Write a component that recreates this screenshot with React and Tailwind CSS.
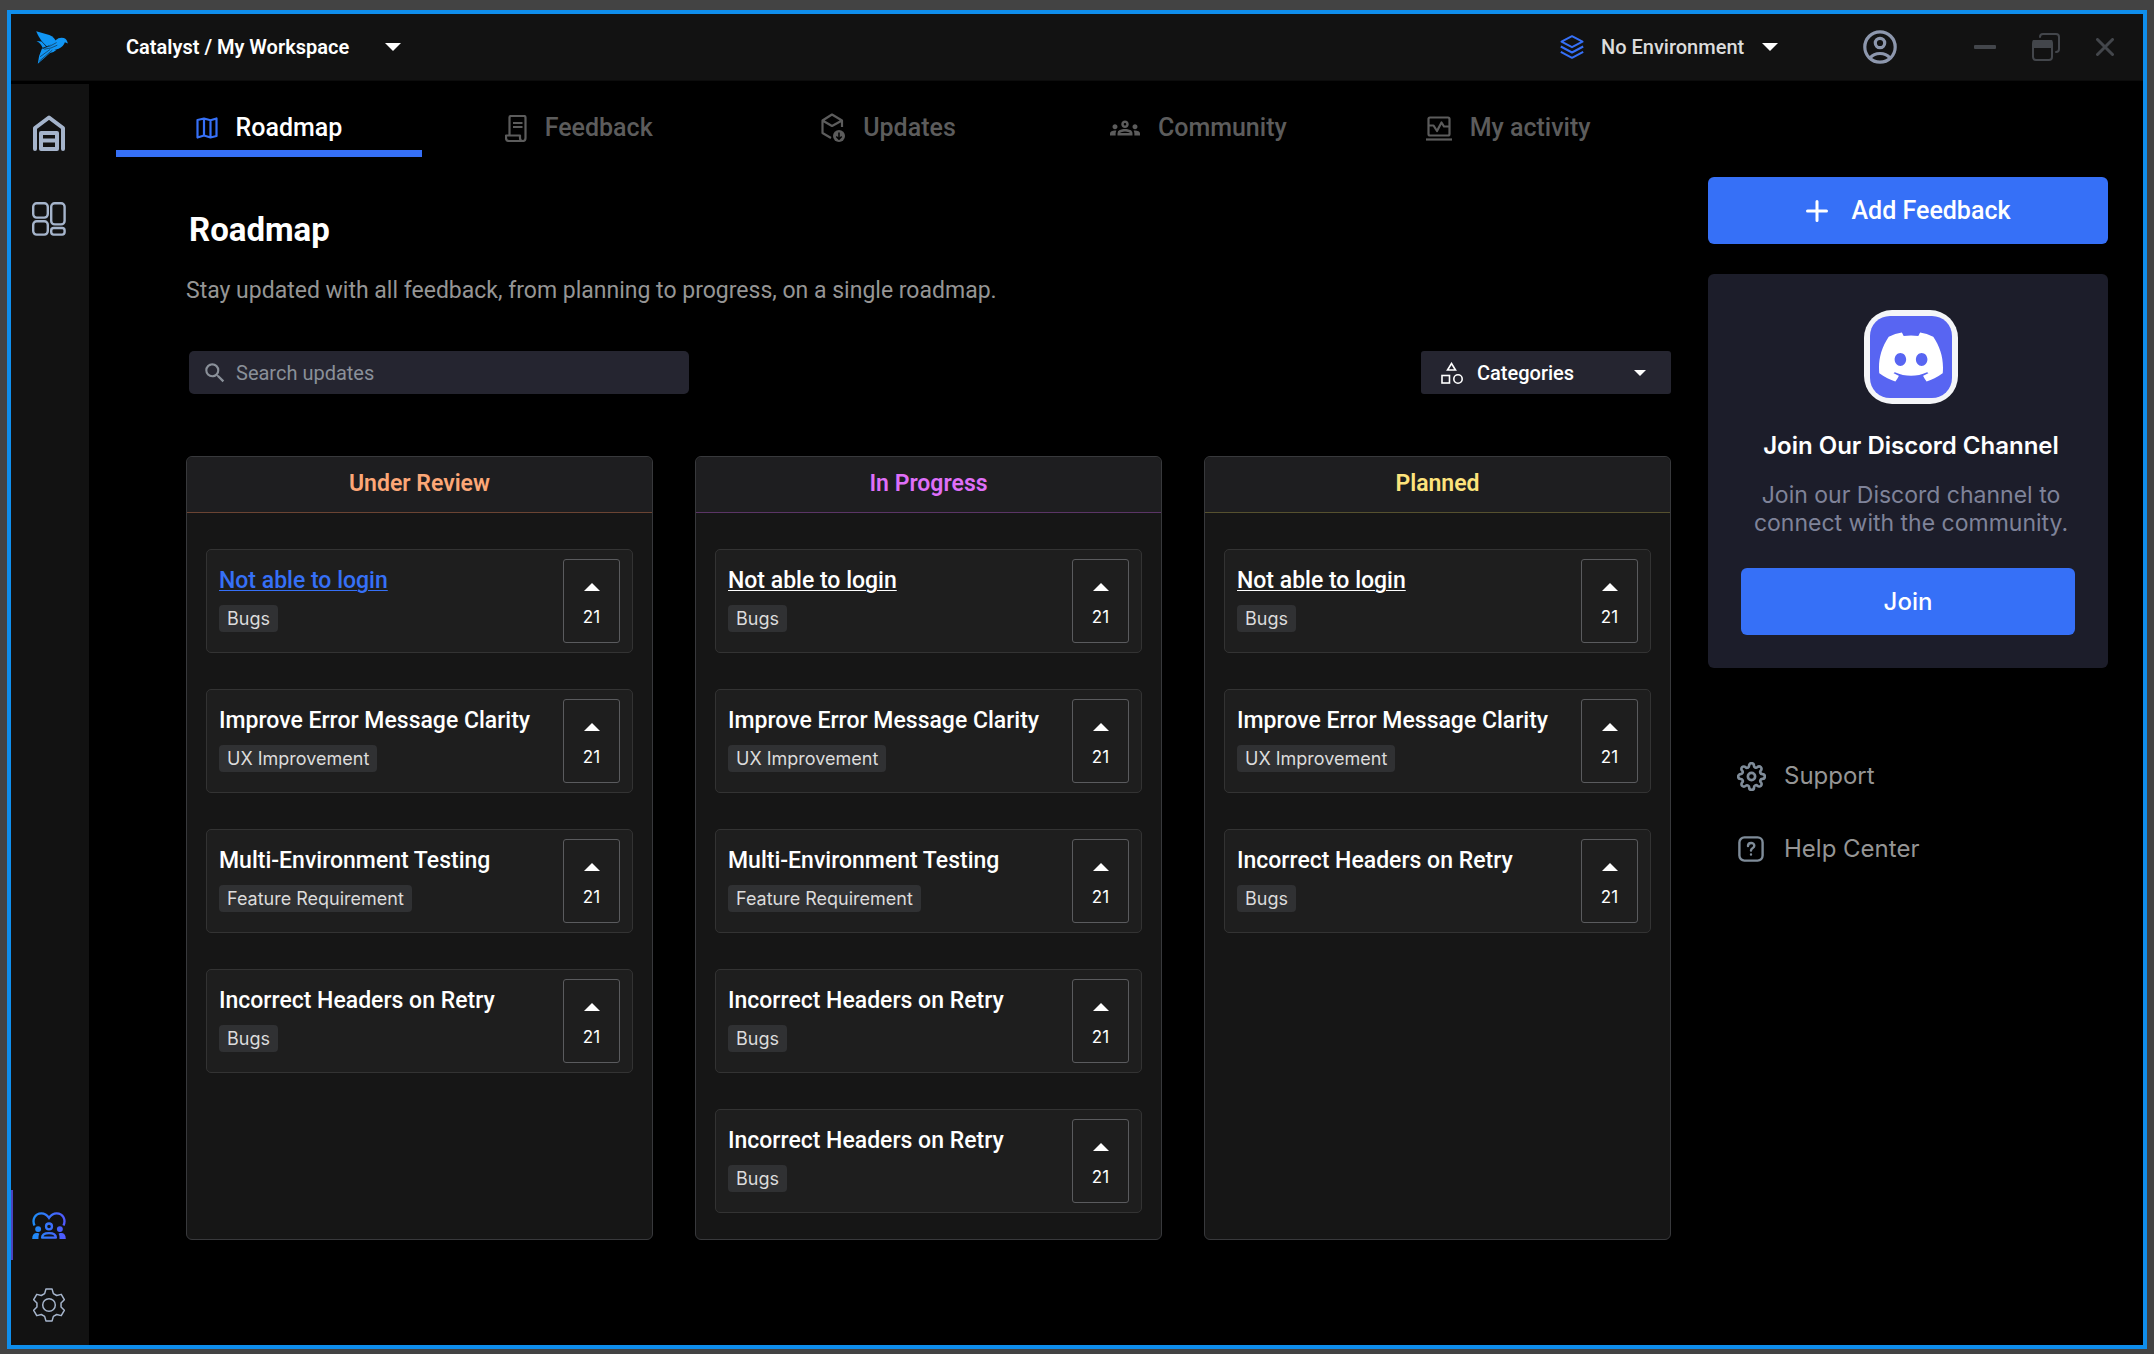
import React from "react";
import { FiSettings } from "react-icons/fi";
import { MdOutlineGroups, MdSearch } from "react-icons/md";
import { SiDiscord } from "react-icons/si";

const ROBOTO = "font-['Roboto',sans-serif]";
const INTER = "font-['Inter',sans-serif]";

function Caret({ className, up = false }) {
  return (
    <svg viewBox="0 0 16 8" className={className} fill="currentColor" aria-hidden="true">
      {up ? <path d="M0 8 8 0l8 8z" /> : <path d="M0 0h16L8 8z" />}
    </svg>
  );
}

function BirdLogo() {
  return (
    <svg viewBox="0 0 96 100" className="h-[33px] w-8" aria-label="Catalyst" role="img">
      <g fill="#1196f5">
        <path d="M0 1 40 12q16 7 22 23L32 46Q12 30 0 1z" />
        <path d="M1 30l15 2 14 15-10 5q-6-16-19-22z" />
        <path d="M60 27q9-9 24-6 10 4 12 17l-9-4q-4 12-19 20-14 6-34 6-6-4-12-8 20-6 38-25z" />
        <path d="M18 52q22 8 44 5-8 8-20 10L5 99q2-25 13-47z" />
      </g>
      <g fill="none" stroke="#121212" strokeWidth="1.6">
        <path d="M18 52q26-4 44-17M24 55q22-1 40-12M12 78l30-22M9 92l40-34" />
      </g>
    </svg>
  );
}

function HomeIcon() {
  return (
    <svg viewBox="0 0 32 36" className="h-9 w-8" fill="none" stroke="#a5b4cb" strokeWidth="4" aria-hidden="true">
      <path d="M2 34V13L16 2.500l14 10.500v21" strokeLinecap="round" strokeLinejoin="round" />
      <path d="M8 18h16v16H8z" strokeLinejoin="round" />
      <path d="M8 25.500h16" />
    </svg>
  );
}

function DashboardIcon() {
  return (
    <svg viewBox="0 0 34 34" className="size-[34px]" fill="none" stroke="#a5b4cb" strokeWidth="2.400" aria-hidden="true">
      <rect x="1.200" y="1.200" width="14.600" height="14.400" rx="3.500" />
      <rect x="19.200" y="1.200" width="13.400" height="21.200" rx="3.500" />
      <rect x="1.200" y="19.200" width="14.600" height="13.400" rx="3.500" />
      <rect x="19.200" y="26" width="13.400" height="6.600" rx="2.500" />
    </svg>
  );
}

function CommunityHeartIcon() {
  return (
    <svg viewBox="0 0 102 82" className="h-[27px] w-[34px]" aria-hidden="true">
      <defs>
        <linearGradient id="heart" gradientUnits="userSpaceOnUse" x1="0" y1="0" x2="102" y2="0">
          <stop offset="0" stopColor="#1c8df5" />
          <stop offset="1" stopColor="#5358ff" />
        </linearGradient>
      </defs>
      <g fill="none" stroke="url(#heart)" strokeWidth="7">
        <path d="M7 41C-1 24 8 4 28 4c10 0 16 4 23 14C58 8 64 4 74 4c20 0 29 20 21 37" />
        <circle cx="51" cy="44" r="9" />
        <path d="M30 78c0-9 9-14 21-14s21 5 21 14z" strokeLinejoin="round" />
      </g>
      <g fill="url(#heart)">
        <circle cx="18" cy="52" r="9" />
        <circle cx="84" cy="52" r="9" />
        <path d="M0 82c0-12 5-18 14-18 4 0 6 1 8 2-3 4-3 9-3 16zM102 82c0-12-5-18-14-18-4 0-6 1-8 2 3 4 3 9 3 16z" />
      </g>
    </svg>
  );
}

const gearPoints = [0, 60, 120, 180, 240, 300]
  .flatMap((a) => [[a - 21, 12.2], [a - 11, 16.2], [a + 11, 16.2], [a + 21, 12.2]])
  .map(([deg, r]) => {
    const t = ((deg - 90) * Math.PI) / 180;
    return `${(17 + r * Math.cos(t)).toFixed(2)},${(17 + r * Math.sin(t)).toFixed(2)}`;
  })
  .join(" ");

function GearIcon() {
  return (
    <svg viewBox="0 0 34 34" className="size-[34px]" fill="none" stroke="#a5b4cb" strokeWidth="1.500" strokeLinejoin="round" aria-hidden="true">
      <polygon points={gearPoints} />
      <circle cx="17" cy="17" r="6.300" />
    </svg>
  );
}

function MapIcon() {
  return (
    <svg viewBox="0 0 22 22" className="size-[22px]" fill="none" stroke="currentColor" strokeWidth="2.200" strokeLinejoin="round" aria-hidden="true">
      <path d="M1.500 3 8 1.500l6.500 1.800 6-1.800v17.500l-6 1.500L8 18.500l-6.500 2zM8 1.500v17M14.500 3.300v17" />
    </svg>
  );
}

function ScrollIcon() {
  return (
    <svg viewBox="0 0 22 27" className="h-[27px] w-[22px]" fill="none" stroke="currentColor" strokeWidth="2.200" strokeLinejoin="round" aria-hidden="true">
      <path d="M4.500 20V2.500C4.500 1.500 5 1 6 1h13c1 0 1.500.5 1.500 1.500V23c0 1.600-1 3-2.700 3H4c-1.700 0-3-1.300-3-3v-2.500h14V23c0 1.700 1 3 2.800 3" />
      <path d="M8 8h9.500M8 12h9.500" />
    </svg>
  );
}

function PackageDownIcon() {
  return (
    <svg viewBox="0 0 24 30" className="h-[30px] w-6" fill="none" stroke="currentColor" strokeWidth="2.200" strokeLinejoin="round" aria-hidden="true">
      <path d="M10 25 1.500 20V7.500L11 1.500l10 6V14M1.500 7.500l9.500 5.500 10-5.500" />
      <circle cx="18" cy="23" r="6" fill="currentColor" stroke="none" />
      <path d="M18 19.500v6.500M15.300 23.500l2.700 2.700 2.700-2.700" stroke="#000" strokeWidth="1.500" />
    </svg>
  );
}

function ActivityIcon() {
  return (
    <svg viewBox="0 0 26 25" className="h-[25px] w-[26px]" fill="none" stroke="currentColor" strokeWidth="2.200" strokeLinejoin="round" aria-hidden="true">
      <path d="M2.500 3c0-1 .5-1.500 1.500-1.500h18c1 0 1.500.5 1.500 1.500v15c0 1-.5 1.500-1.500 1.500H4c-1 0-1.500-.5-1.500-1.500z" />
      <path d="M2.500 9.500h5L11 15l4.500-8.500 2.500 4h5.500" />
      <path d="M0 23.500h26" />
    </svg>
  );
}

function LayersIcon() {
  return (
    <svg viewBox="0 0 24 24" className="size-6" fill="none" stroke="#3670f7" strokeWidth="2" strokeLinejoin="round" aria-hidden="true">
      <path d="M12 1.200 22.500 6.700 12 12.200 1.500 6.700z" />
      <path d="M.8 11.500 12 17.500l11.200-6M.8 16.800l11.200 6 11.200-6" />
    </svg>
  );
}

function UserIcon() {
  return (
    <svg viewBox="0 0 34 34" className="size-[34px]" fill="none" stroke="#8d97ad" strokeWidth="3.200" aria-hidden="true">
      <circle cx="17" cy="17" r="15.200" />
      <circle cx="17" cy="13" r="4.700" />
      <path d="M7 28c2.500-3 6-4.500 10-4.500S24.500 25 27 28" />
    </svg>
  );
}

function RestoreIcon() {
  return (
    <svg viewBox="0 0 28 28" className="size-7" fill="none" stroke="currentColor" strokeWidth="2" strokeLinecap="round" aria-hidden="true">
      <rect x="1" y="8" width="19" height="19" rx="3" />
      <path d="M1.500 8h18v6h-18z" fill="currentColor" strokeLinejoin="round" />
      <path d="M8 4c0-2 1-3 3-3h13c2 0 3 1 3 3v12c0 2-1 3-3 3" />
    </svg>
  );
}

function ShapesIcon({ className }) {
  return (
    <svg viewBox="0 0 22 22" className={className} fill="none" stroke="currentColor" strokeWidth="1.600" aria-hidden="true">
      <path d="M10.500 1.500 14.500 8h-8z" />
      <rect x="1" y="13.500" width="7.500" height="7.500" />
      <circle cx="17" cy="17" r="4.200" />
    </svg>
  );
}

function HelpIcon() {
  return (
    <svg viewBox="0 0 26 26" className="size-[26px]" fill="none" stroke="#7f8c99" strokeWidth="2.400" strokeLinecap="round" aria-hidden="true">
      <rect x="1.400" y="1.400" width="23.200" height="23.200" rx="5" />
      <path d="M10 10c0-4 6.300-4 6.300-.3 0 2.400-3.300 2.500-3.300 4.800" />
      <circle cx="13" cy="18.500" r=".6" fill="#7f8c99" strokeWidth="1.200" />
    </svg>
  );
}

const tabs = [
  { label: "Roadmap", icon: <MapIcon />, active: true },
  { label: "Feedback", icon: <ScrollIcon /> },
  { label: "Updates", icon: <PackageDownIcon /> },
  { label: "Community", icon: <MdOutlineGroups className="size-[30px]" /> },
  { label: "My activity", icon: <ActivityIcon /> },
];

const login = { title: "Not able to login", tag: "Bugs", link: true };
const clarity = { title: "Improve Error Message Clarity", tag: "UX Improvement" };
const testing = { title: "Multi-Environment Testing", tag: "Feature Requirement" };
const headers = { title: "Incorrect Headers on Retry", tag: "Bugs" };

const columns = [
  {
    name: "Under Review",
    head: "text-[#fca777] border-[#6b4433]",
    items: [{ ...login, highlight: true }, clarity, testing, headers],
  },
  {
    name: "In Progress",
    head: "text-[#df6ff8] border-[#5b3566]",
    items: [login, clarity, testing, headers, headers],
  },
  {
    name: "Planned",
    head: "text-[#fde37c] border-[#56512f]",
    items: [login, clarity, headers],
  },
];

function Card({ item }) {
  return (
    <li className="flex h-[104px] items-center justify-between rounded-[5px] border border-[#333333] bg-[#1e1e1e] px-3">
      <div className="flex flex-col items-start gap-2.5 pb-1">
        {item.link ? (
          <a
            href="#login"
            className={`text-[23px] leading-7 font-medium underline decoration-1 underline-offset-2 ${
              item.highlight ? "text-[#3670f7]" : "text-white"
            }`}
          >
            {item.title}
          </a>
        ) : (
          <h3 className="text-[23px] leading-7 font-medium text-white">{item.title}</h3>
        )}
        <span className={`rounded bg-[#303133] px-2 text-lg leading-[27px] text-[#dcdcdc] ${INTER}`}>
          {item.tag}
        </span>
      </div>
      <button
        type="button"
        aria-label={`Upvote ${item.title}`}
        className={`flex h-[84px] w-[57px] flex-col items-center justify-center gap-4 rounded-[3px] border border-[#5a5b5e] pt-2 text-[17px] leading-5 text-white ${INTER}`}
      >
        <Caret up className="h-2 w-4" />
        21
      </button>
    </li>
  );
}

function Column({ column }) {
  return (
    <section className="rounded-md border border-[#38393c] bg-[#161616]">
      <h2
        className={`flex h-14 items-center justify-center rounded-t-md border-b bg-[#1e1e20] pb-0.5 text-[23px] leading-7 font-semibold ${column.head}`}
      >
        {column.name}
      </h2>
      <ul className="flex flex-col gap-9 px-[19px] pt-9 pb-[26px]">
        {column.items.map((item, i) => (
          <Card key={i} item={item} />
        ))}
      </ul>
    </section>
  );
}

export default function App() {
  return (
    <div className={`flex min-h-screen bg-[#434343] px-[7px] pt-2.5 pb-[5px] ${ROBOTO}`}>
      <div className="flex flex-1 flex-col border-4 border-[#0f8eec] bg-black">
        <header className="flex h-[67px] items-center justify-between border-b border-[#0c0c0c] bg-[#121212] pr-[29px] pl-[25px]">
          <div className="flex items-center gap-[58px]">
            <BirdLogo />
            <div className="relative flex items-center">
              <select
                aria-label="Workspace"
                className="appearance-none bg-transparent pr-[51px] text-xl leading-7 font-semibold text-white"
              >
                <option>Catalyst / My Workspace</option>
              </select>
              <Caret className="pointer-events-none absolute right-0 h-2 w-4 text-white" />
            </div>
          </div>
          <div className="flex items-center">
            <LayersIcon />
            <div className="relative ml-[17px] flex items-center">
              <select
                aria-label="Environment"
                className="appearance-none bg-transparent pr-[33px] text-xl leading-7 font-medium text-[#dcdcdc]"
              >
                <option>No Environment</option>
              </select>
              <Caret className="pointer-events-none absolute right-0 h-2 w-4 text-white" />
            </div>
            <button type="button" aria-label="Account" className="ml-[85px]">
              <UserIcon />
            </button>
            <div className="ml-[77px] flex items-center gap-[36px] text-[#43464b]">
              <button type="button" aria-label="Minimize">
                <svg viewBox="0 0 22 4" className="h-1 w-[22px]" fill="currentColor">
                  <rect width="22" height="4" rx="1" />
                </svg>
              </button>
              <button type="button" aria-label="Restore">
                <RestoreIcon />
              </button>
              <button type="button" aria-label="Close">
                <svg viewBox="0 0 18 18" className="size-[18px]" fill="none" stroke="currentColor" strokeWidth="3" strokeLinecap="round">
                  <path d="M1.500 1.500l15 15M16.500 1.500l-15 15" />
                </svg>
              </button>
            </div>
          </div>
        </header>

        <div className="flex flex-1 pt-[3px]">
          <nav aria-label="Main" className="flex w-[78px] flex-col items-center bg-[#121212] pt-[31px] pr-0.5 pb-[23px]">
            <button type="button" aria-label="Home">
              <HomeIcon />
            </button>
            <button type="button" aria-label="Dashboard" className="mt-[51px]">
              <DashboardIcon />
            </button>
            <button
              type="button"
              aria-label="Community"
              className="mt-auto mb-7 flex h-[70px] w-full items-center justify-center border-x-2 border-l-[#4a44c0] border-r-transparent"
            >
              <CommunityHeartIcon />
            </button>
            <button type="button" aria-label="Settings">
              <GearIcon />
            </button>
          </nav>

          <main className="min-w-0 flex-1 pl-[27px]">
            <div role="tablist" className="grid grid-cols-5 gap-1 pr-2.5">
              {tabs.map((t) => (
                <button
                  key={t.label}
                  type="button"
                  role="tab"
                  aria-selected={!!t.active}
                  className={`flex h-[73px] items-center justify-center gap-[18px] border-b-[7px] pt-[22px] text-[25px] leading-8 font-medium ${
                    t.active ? "border-[#3670f7] text-white" : "border-transparent text-[#5c5c5c]"
                  }`}
                >
                  <span className={t.active ? "text-[#3670f7]" : "text-[#5c5c5c]"}>{t.icon}</span>
                  {t.label}
                </button>
              ))}
            </div>

            <div className="pl-[70px]">
              <h1 className="mt-[53px] pl-[3px] text-[33px] leading-10 font-bold text-white">Roadmap</h1>
              <p className="mt-[27px] text-[23px] leading-7 text-[#959595]">
                Stay updated with all feedback, from planning to progress, on a single roadmap.
              </p>

              <div className="mt-[46px] flex items-center justify-between pl-[3px]">
                <label className="flex h-[43px] w-[500px] items-center gap-2 rounded-[5px] bg-[#252530] px-[13px]">
                  <MdSearch className="size-[26px] text-[#8a9099]" aria-hidden="true" />
                  <input
                    type="text"
                    aria-label="Search updates"
                    placeholder="Search updates"
                    className="min-w-0 flex-1 bg-transparent text-xl leading-6 text-white outline-none placeholder:text-[#8a9099]"
                  />
                </label>
                <div className="relative flex w-[250px] items-center text-white">
                  <ShapesIcon className="pointer-events-none absolute left-5 size-[22px]" />
                  <select
                    aria-label="Categories"
                    className="h-[43px] w-full appearance-none rounded-[3px] bg-[#252530] pl-14 text-xl leading-6 font-medium"
                  >
                    <option>Categories</option>
                  </select>
                  <Caret className="pointer-events-none absolute right-[25px] h-[6px] w-3" />
                </div>
              </div>

              <div className="mt-[62px] grid grid-cols-3 gap-[42px]">
                {columns.map((c) => (
                  <Column key={c.name} column={c} />
                ))}
              </div>
            </div>
          </main>

          <aside className={`mr-[35px] ml-[37px] w-[400px] pt-[93px] ${INTER}`}>
            <button
              type="button"
              className={`flex h-[67px] w-full items-center justify-center gap-6 rounded-md bg-[#3670f7] text-[25px] leading-8 font-medium text-white ${ROBOTO}`}
            >
              <svg viewBox="0 0 22 22" className="size-[22px]" fill="none" stroke="currentColor" strokeWidth="3" strokeLinecap="round" aria-hidden="true">
                <path d="M11 1.500v19M1.500 11h19" />
              </svg>
              Add Feedback
            </button>

            <section className="mt-[30px] rounded-md bg-[#1c1d2a] px-[33px] pt-9 pb-[33px] text-center">
              <div className="flex flex-col items-center pl-1.5">
                <div className="rounded-[28px] bg-[#f4f5f8] p-1.5">
                  <div className="flex size-[82px] items-center justify-center rounded-[20px] bg-[#5865f2]">
                    <SiDiscord className="size-16 text-white" aria-hidden="true" />
                  </div>
                </div>
                <h2 className="mt-[26px] text-2xl leading-8 font-semibold text-white">Join Our Discord Channel</h2>
                <p className="mt-[19px] text-[23px] leading-7 text-[#7f8399]">
                  Join our Discord channel to<br />connect with the community.
                </p>
              </div>
              <button
                type="button"
                className="mt-[31px] h-[67px] w-full rounded-md bg-[#3670f7] text-2xl leading-8 font-medium text-white"
              >
                Join
              </button>
            </section>

            <nav aria-label="Help" className="mt-[90px] flex flex-col gap-[37px] pl-[29px] text-2xl leading-9 text-[#959595]">
              <a href="#support" className="flex items-center gap-[18px]">
                <FiSettings className="size-[29px] text-[#7f8c99]" strokeWidth="2.200" aria-hidden="true" />
                Support
              </a>
              <a href="#help" className="flex items-center gap-5 pl-px">
                <HelpIcon />
                Help Center
              </a>
            </nav>
          </aside>
        </div>
      </div>
    </div>
  );
}
